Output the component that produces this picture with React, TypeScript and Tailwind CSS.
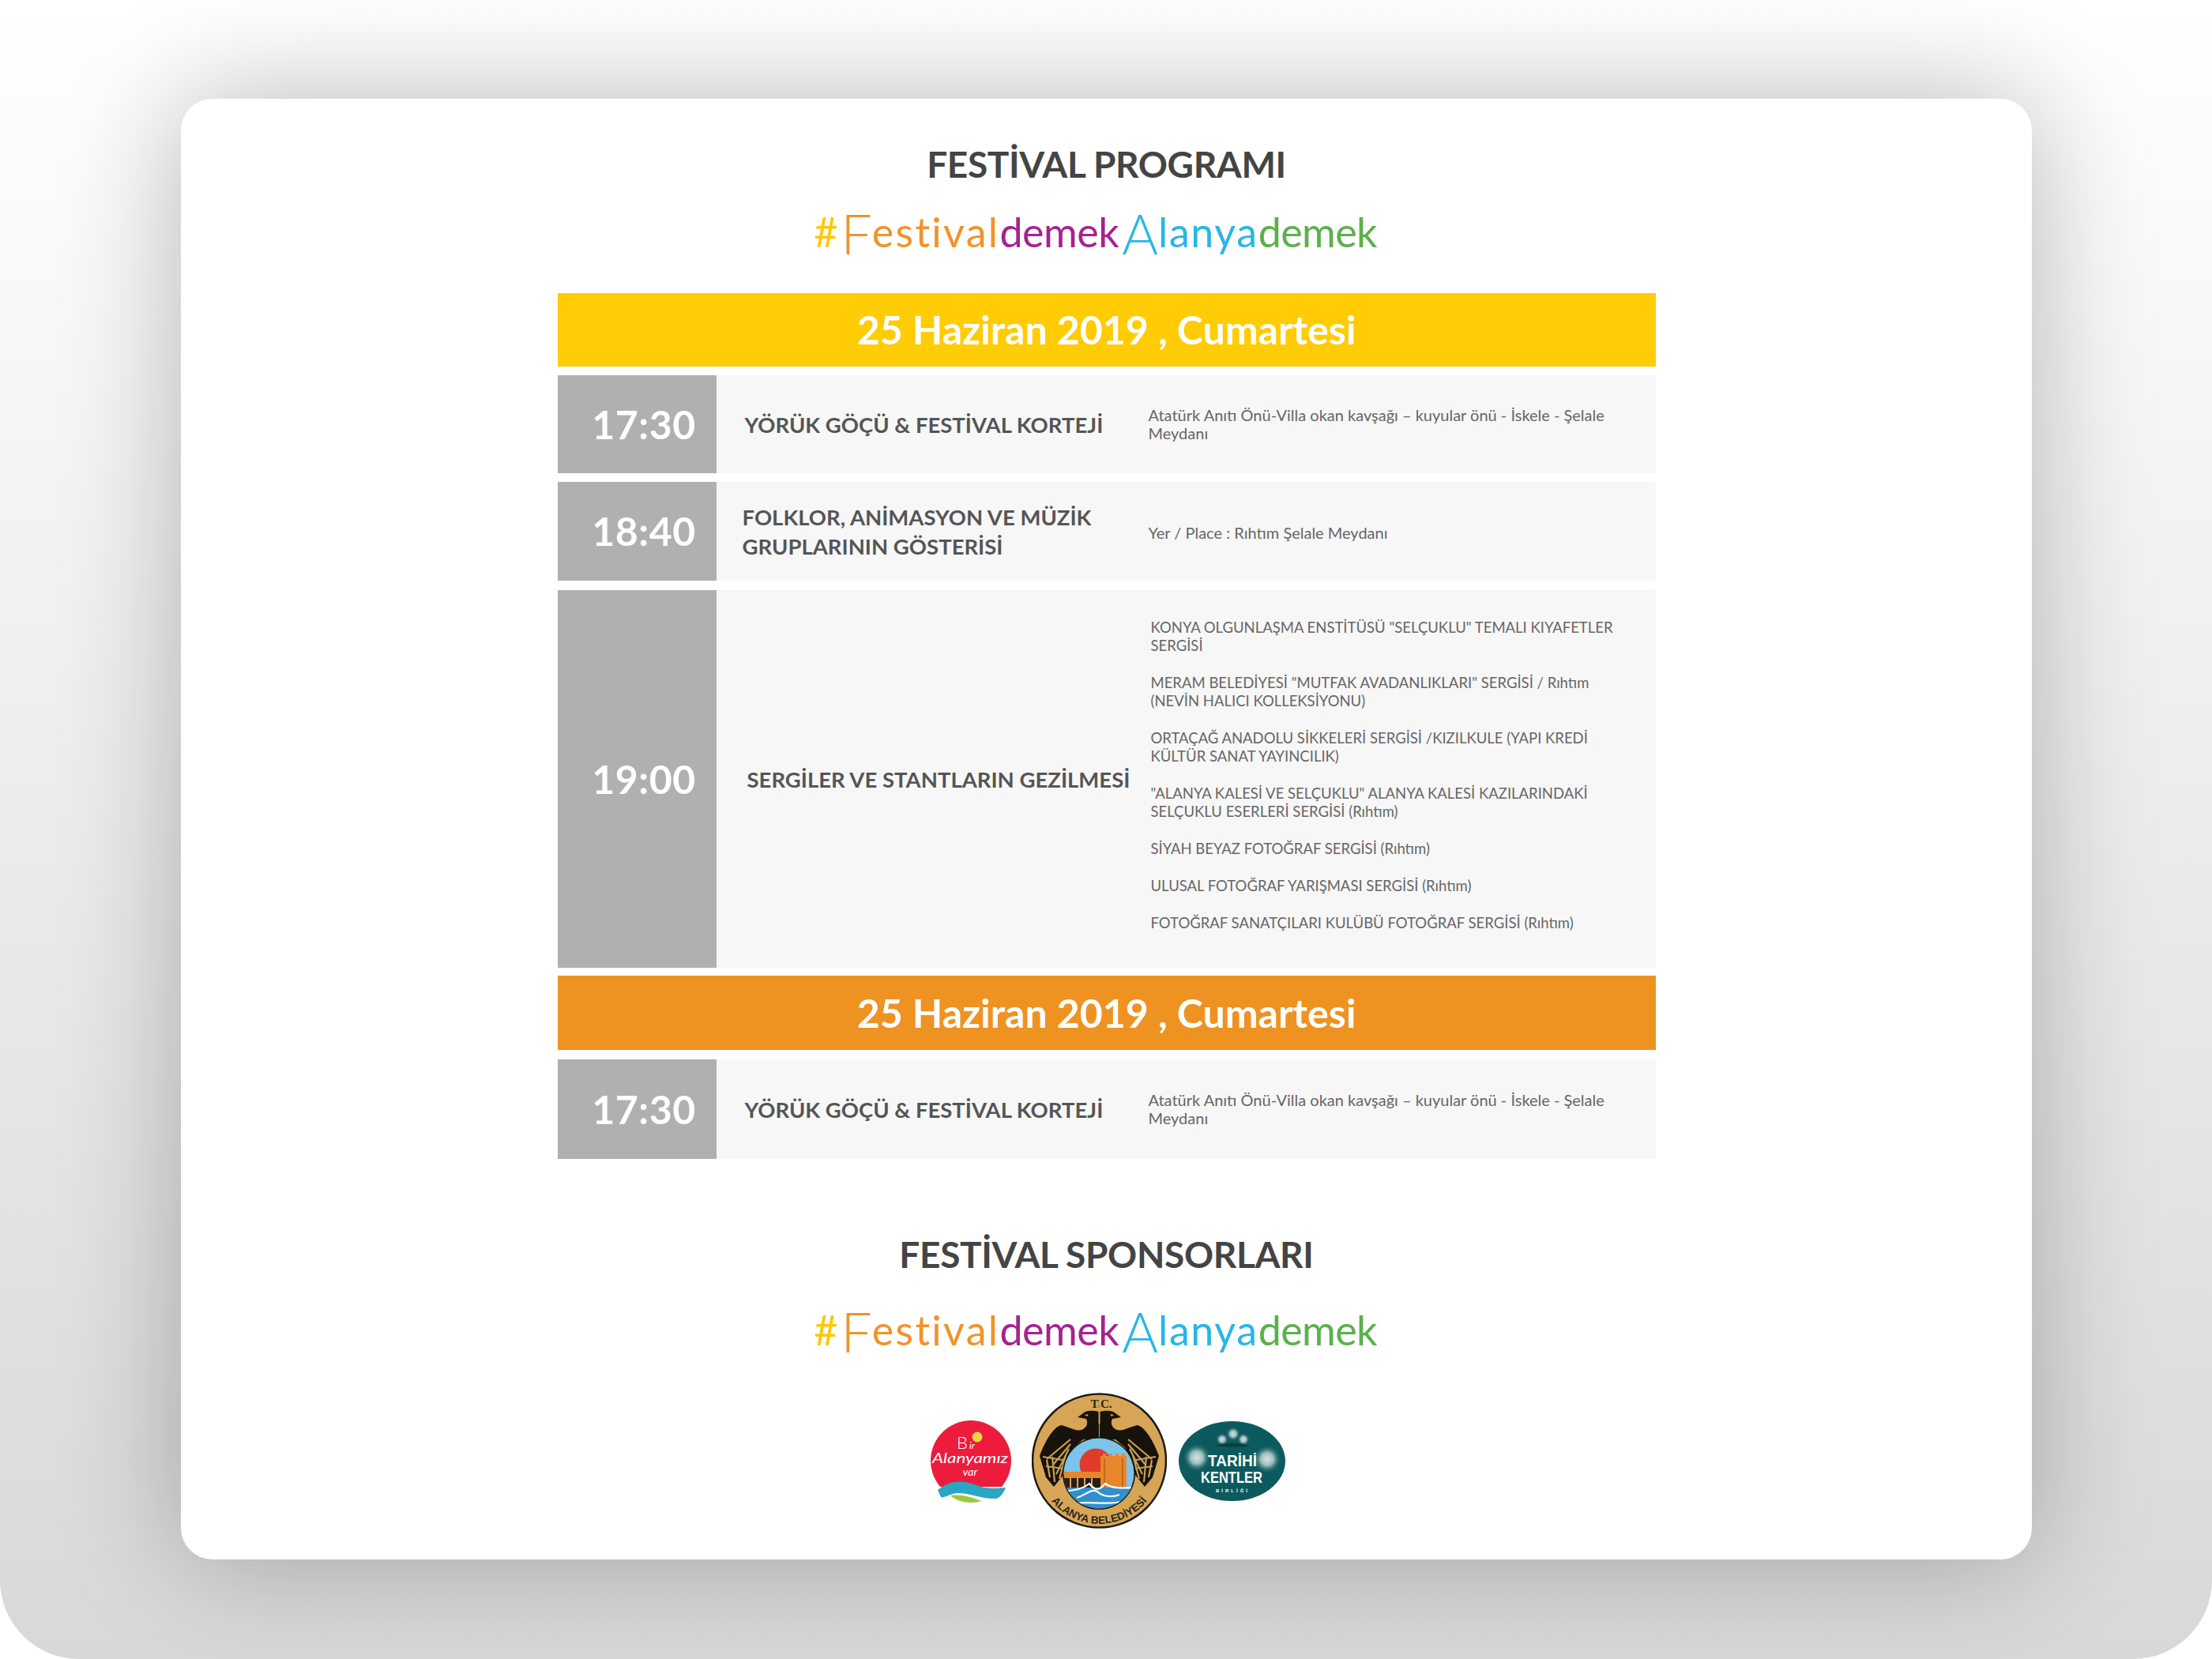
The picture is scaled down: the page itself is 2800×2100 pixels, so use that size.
import { FC, ReactNode } from 'react';

const fontSans = 'font-["Lato","Noto_Sans",sans-serif]';

const Hashtag: FC<{ className?: string }> = ({ className }) => (
	<p className={`${className} mr-[28px] font-["Lato",sans-serif] text-[52px] leading-[70px] font-normal whitespace-nowrap`}>
		<span className="tracking-[4px] text-[#fdc70c]">#</span>
		<span className="align-[-9px] text-[70px] font-light text-[#f0932b]">F</span>
		<span className="tracking-[2.3px] text-[#f0932b]">estival</span>
		<span className="tracking-[-0.5px] text-[#a6228e]">demek</span>
		<span className="ml-[4px] align-[-9px] text-[70px] font-light text-[#29b6e5]">A</span>
		<span className="tracking-[1.6px] text-[#29b6e5]">lanya</span>
		<span className="tracking-[-0.6px] text-[#5cb04b]">demek</span>
	</p>
);

const DateBar: FC<{ color: string; className?: string }> = ({ color, className }) => (
	<div className={`${color} ${className} flex h-[93px] items-center justify-center text-[50px] font-bold text-white`}>
		25 Haziran 2019 , Cumartesi
	</div>
);

const Row: FC<{ time: string; height: string; titleClass: string; detailClass: string; title: ReactNode; children: ReactNode }> = ({
	time,
	height,
	titleClass,
	detailClass,
	title,
	children
}) => (
	<div className={`${height} grid grid-cols-[201px_547px_1fr] bg-[#f7f7f7]`}>
		<div className="flex items-center justify-center bg-[#b0b0b0] pl-[18px] text-[50px] font-bold tracking-[0.5px] text-white">
			{time}
		</div>
		<div className={`${titleClass} flex items-center text-[27.5px] leading-[37px] font-bold whitespace-pre text-[#555]`}>{title}</div>
		<div className={`${detailClass} flex flex-col justify-center leading-[23px] whitespace-pre text-[#666]`}>{children}</div>
	</div>
);

const RedLogo: FC = () => (
	<svg width="105" height="104" viewBox="0 0 105 104">
		<circle cx="52" cy="51" r="51" fill="#ed1c3c" />
		<path d="M0 84 H105 V104 H0 Z" fill="#fff" />
		<path d="M10 88 C30 72 48 78 62 83 C74 87 88 86 96 85 C94 90 90 98 84 99 C66 100 52 92 36 92 C26 92 18 99 14 97 Z" fill="#2aa5c4" />
		<path d="M26 95 C42 93 54 98 66 102 C52 106 36 104 26 95 Z" fill="#9cc93b" />
		<circle cx="60" cy="21" r="6.5" fill="#e8d93a" />
		<text x="34" y="36" fontFamily="Lato, sans-serif" fontWeight="300" fontSize="22" fill="#fff">B</text>
		<text x="50" y="36" fontFamily="Lato, sans-serif" fontStyle="italic" fontSize="12" fill="#fff">ir</text>
		<text x="51" y="54" textAnchor="middle" textLength="96" lengthAdjust="spacingAndGlyphs" fontFamily="Lato, sans-serif" fontStyle="italic" fontSize="18" fill="#fff">Alanyamız</text>
		<text x="51" y="70" textAnchor="middle" fontFamily="Lato, sans-serif" fontStyle="italic" fontSize="14" fill="#fff">var</text>
	</svg>
);

const Wing: FC = () => (
	<g>
		<path
			d="M100 37 C92 35 84 35 80 39 L73 44 L84 46 C87 52 84 58 78 60 C70 62 62 56 52 54 C42 57 32 74 25 93 L33 120 L43 132 L55 117 L58 101 L68 82 L80 72 L100 74 Z"
			fill="#17130c"
		/>
		<path d="M82 41 L87 40 L85 43 Z" fill="#d9a83f" />
		<path d="M64 72 L34 97 M64 78 L42 104 M62 84 L46 116 M58 92 L50 122 M34 98 L38 120 M41 94 L44 126 M29 94 L54 98 M33 106 L55 109" stroke="#c99f52" strokeWidth="2.2" fill="none" />
	</g>
);

const SealLogo: FC = () => (
	<svg width="171" height="173" viewBox="15 13 171 173">
		<defs>
			<clipPath id="seal-inner">
				<circle cx="100" cy="115" r="44.5" />
			</clipPath>
			<path id="seal-arc" d="M29 132 A 78 78 0 0 0 172 132" />
		</defs>
		<circle cx="100.5" cy="99" r="84.5" fill="#d7a556" stroke="#1e1a14" strokeWidth="2.5" />
		<text x="103" y="32" textAnchor="middle" fontFamily="Liberation Serif, serif" fontWeight="700" fontSize="15" fill="#2a2418">T.C.</text>
		<Wing />
		<g transform="translate(201 0) scale(-1 1)">
			<Wing />
		</g>
		<rect x="99.5" y="30" width="2" height="22" fill="#d7a556" />
		<circle cx="100" cy="115" r="46" fill="#17130c" />
		<g clipPath="url(#seal-inner)">
			<rect x="50" y="65" width="100" height="100" fill="#7cc4ea" />
			<circle cx="96" cy="104" r="20.5" fill="#e03a2a" />
			<rect x="50" y="113" width="55" height="8" fill="#e8862a" />
			<rect x="50" y="121" width="55" height="14" fill="#2a1d12" />
			<path d="M64 121 V135 M73 121 V135 M82 121 V135 M91 121 V135" stroke="#d9a062" strokeWidth="2" />
			<path d="M102 134 V93 H105 V90 H109 V93 H113 V90 H117 V93 H121 V90 H125 V93 H129 V90 H133 V93 H135 V134 Z" fill="#e8862a" />
			<path d="M107 96 V134 M130 96 V134" stroke="#a9551b" strokeWidth="1.2" />
			<rect x="50" y="133" width="100" height="35" fill="#2f8fcf" />
			<path d="M55 138 C68 136 78 136 88 128 C94 136 100 138 108 128 C116 134 128 134 146 133 M72 146 C84 142 90 134 98 138 C104 144 116 146 126 142 M70 153 C90 150 110 156 134 150" stroke="#fff" strokeWidth="2.2" fill="none" />
		</g>
		<text fontFamily="Liberation Sans, sans-serif" fontWeight="700" fontSize="13.5" fill="#2a2418" textAnchor="middle">
			<textPath href="#seal-arc" startOffset="50%">
				ALANYA BELEDİYESİ
			</textPath>
		</text>
	</svg>
);

const GreenLogo: FC = () => (
	<svg width="135" height="101" viewBox="0 0 135 101">
		<defs>
			<radialGradient id="blob">
				<stop offset="0%" stopColor="#d6e4e4" />
				<stop offset="45%" stopColor="#9fbdbe" />
				<stop offset="100%" stopColor="#0d5a5e" stopOpacity="0" />
			</radialGradient>
		</defs>
		<ellipse cx="67.5" cy="50.5" rx="67.5" ry="50.5" fill="#0d5a5e" />
		<circle cx="23" cy="46" r="18" fill="url(#blob)" />
		<circle cx="112" cy="48" r="18" fill="url(#blob)" />
		<circle cx="69" cy="16" r="9" fill="url(#blob)" />
		<circle cx="55" cy="23" r="8" fill="url(#blob)" />
		<circle cx="82" cy="23" r="8" fill="url(#blob)" />
		<path d="M46 31 C58 27 78 27 90 31 C78 33 58 33 46 31 Z" fill="#063f42" />
		<text x="68" y="57" textAnchor="middle" textLength="62" lengthAdjust="spacingAndGlyphs" fontFamily="Liberation Sans, sans-serif" fontWeight="700" fontSize="20" fill="#fff">TARİHİ</text>
		<text x="67" y="78" textAnchor="middle" textLength="78" lengthAdjust="spacingAndGlyphs" fontFamily="Liberation Sans, sans-serif" fontWeight="700" fontSize="20" fill="#fff">KENTLER</text>
		<text x="67" y="90" textAnchor="middle" textLength="40" fontFamily="Liberation Sans, sans-serif" fontWeight="700" fontSize="6" fill="#fff">BİRLİĞİ</text>
	</svg>
);

const exhibitions = [
	'KONYA OLGUNLAŞMA ENSTİTÜSÜ "SELÇUKLU" TEMALI KIYAFETLER\nSERGİSİ',
	'MERAM BELEDİYESİ "MUTFAK AVADANLIKLARI" SERGİSİ / Rıhtım\n(NEVİN HALICI KOLLEKSİYONU)',
	'ORTAÇAĞ ANADOLU SİKKELERİ SERGİSİ /KIZILKULE (YAPI KREDİ\nKÜLTÜR SANAT YAYINCILIK)',
	'"ALANYA KALESİ VE SELÇUKLU" ALANYA KALESİ KAZILARINDAKİ\nSELÇUKLU ESERLERİ SERGİSİ (Rıhtım)',
	'SİYAH BEYAZ FOTOĞRAF SERGİSİ (Rıhtım)',
	'ULUSAL FOTOĞRAF YARIŞMASI SERGİSİ (Rıhtım)',
	'FOTOĞRAF SANATÇILARI KULÜBÜ FOTOĞRAF SERGİSİ (Rıhtım)'
];

const kortejPlace = 'Atatürk Anıtı Önü-Villa okan kavşağı – kuyular önü - İskele - Şelale\nMeydanı';

const App: FC = () => {
	return (
		<div className="h-[2100px] w-[2800px] overflow-hidden rounded-b-[100px] bg-linear-to-b from-white to-[#d8d8d8] pt-[125px] pl-[229px]">
			<div className={`${fontSans} flex h-[1849px] w-[2343px] flex-col items-center rounded-[40px] bg-white pt-[52px] shadow-[0_0_150px_rgba(0,0,0,0.27)]`}>
				<h1 className="text-[46px] leading-[62px] font-bold tracking-[-0.35px] text-[#444]">FESTİVAL PROGRAMI</h1>
				<Hashtag className="mt-[19px]" />
				<div className="mt-[41px] flex w-[1390px] flex-col">
					<DateBar color="bg-[#ffcc05]" />
					<div className="mt-[11px]">
						<Row time="17:30" height="h-[124px]" titleClass="pl-[36px]" detailClass="text-[20px]" title="YÖRÜK GÖÇÜ & FESTİVAL KORTEJİ">
							{kortejPlace}
						</Row>
					</div>
					<div className="mt-[11px]">
						<Row time="18:40" height="h-[125px]" titleClass="pl-[33px]" detailClass="pt-[3px] text-[20px]" title={'FOLKLOR, ANİMASYON VE MÜZİK\nGRUPLARININ GÖSTERİSİ'}>
							Yer / Place : Rıhtım Şelale Meydanı
						</Row>
					</div>
					<div className="mt-[12px]">
						<Row time="19:00" height="h-[478px]" titleClass="pl-[39px]" detailClass="gap-[24px] pb-[9px] pl-[3px] text-[18.5px]" title="SERGİLER VE STANTLARIN GEZİLMESİ">
							{exhibitions.map((item) => (
								<p key={item}>{item}</p>
							))}
						</Row>
					</div>
					<DateBar color="bg-[#ee9322]" className="mt-[10px] h-[94px]" />
					<div className="mt-[12px]">
						<Row time="17:30" height="h-[126px]" titleClass="pl-[36px]" detailClass="text-[20px]" title="YÖRÜK GÖÇÜ & FESTİVAL KORTEJİ">
							{kortejPlace}
						</Row>
					</div>
				</div>
				<h2 className="mt-[90px] text-[46px] leading-[62px] font-bold tracking-[-0.35px] text-[#444]">FESTİVAL SPONSORLARI</h2>
				<Hashtag className="mt-[29px]" />
				<div className="mt-[43px] ml-[3px] flex items-center">
					<RedLogo />
					<div className="ml-[24px]">
						<SealLogo />
					</div>
					<div className="ml-[15px]">
						<GreenLogo />
					</div>
				</div>
			</div>
		</div>
	);
};

export default App;
